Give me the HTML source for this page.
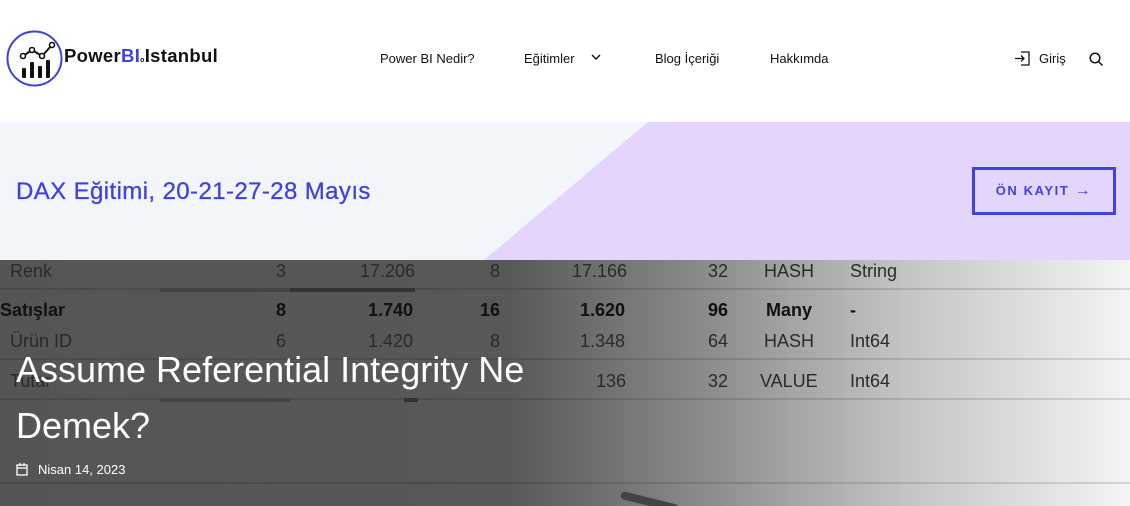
<!DOCTYPE html>
<html><head><meta charset="utf-8"><style>
*{margin:0;padding:0;box-sizing:border-box}
body{width:1130px;height:506px;overflow:hidden;font-family:"Liberation Sans",sans-serif;background:#fff;position:relative}
.hdr{position:absolute;left:0;top:0;width:1130px;height:122px;background:#fff}
.nav{position:absolute;top:51px;font-size:13px;color:#111}
.ban{position:absolute;left:0;top:122px;width:1130px;height:138px;background:#f2f6fb;overflow:hidden}
.hero{position:absolute;left:0;top:260px;width:1130px;height:246px;background:linear-gradient(90deg,#555 0%,#585858 45%,#8a8a8a 62%,#c4c4c4 80%,#f4f4f4 100%);overflow:hidden}
.t{position:absolute;font-size:18px;color:#2a2a2a;font-family:"Liberation Sans Narrow","Liberation Sans",sans-serif}
.ln{position:absolute;left:0;width:1130px;height:2px;background:rgba(0,0,0,.12)}
</style></head><body>
<div class="hdr">
<svg style="position:absolute;left:6px;top:30px" width="57" height="57" viewBox="0 0 57 57">
<circle cx="28.5" cy="28.5" r="27" fill="none" stroke="#3f42e0" stroke-width="2"/>
<g fill="#111"><rect x="16" y="38" width="4" height="10" rx="1"/><rect x="24" y="32" width="4" height="16" rx="1"/><rect x="32" y="36" width="4" height="12" rx="1"/><rect x="40" y="30" width="4" height="18" rx="1"/></g>
<polyline points="17,26 26,20 36,26 46,15" fill="none" stroke="#111" stroke-width="2"/>
<g fill="#fff" stroke="#111" stroke-width="1.6"><circle cx="17" cy="26" r="2.5"/><circle cx="26" cy="20" r="2.5"/><circle cx="36" cy="26" r="2.5"/><circle cx="46" cy="15" r="2.5"/></g>
</svg>
<div style="position:absolute;left:64px;top:45px;font-size:18.5px;font-weight:bold;color:#111;letter-spacing:.3px">Power<span style="color:#3f42e0">BI</span><span style="font-size:7px">o</span>Istanbul</div>
<div class="nav" style="left:380px">Power BI Nedir?</div>
<div class="nav" style="left:524px">Eğitimler</div>
<svg style="position:absolute;left:591px;top:54px" width="10" height="7"><polyline points="1,1 5,5 9,1" fill="none" stroke="#111" stroke-width="1.4"/></svg>
<div class="nav" style="left:655px">Blog İçeriği</div>
<div class="nav" style="left:770px">Hakkımda</div>
<svg style="position:absolute;left:1014px;top:51px" width="16" height="15" viewBox="0 0 16 15" fill="none" stroke="#111" stroke-width="1.3"><path d="M7 1H15V14H7M1 7.5H10M7 4.5L10 7.5L7 10.5"/></svg>
<div class="nav" style="left:1039px">Giriş</div>
<svg style="position:absolute;left:1089px;top:52px" width="15" height="15" fill="none" stroke="#111" stroke-width="1.5"><circle cx="6" cy="6" r="4.8"/><line x1="9.5" y1="9.5" x2="13.5" y2="13.5"/></svg>
</div>
<div class="ban">
<svg style="position:absolute;left:0;top:0" width="1130" height="138"><polygon points="648,0 1130,0 1130,138 484,138" fill="#e3d5fb"/></svg>
<div style="position:absolute;left:16px;top:56px;font-size:24px;color:#3f42e0;letter-spacing:.4px;-webkit-text-stroke:.3px #3f42e0">DAX Eğitimi, 20-21-27-28 Mayıs</div>
<div style="position:absolute;left:972px;top:45px;width:144px;height:48px;border:3px solid #3f42e0;color:#3f42e0;font-size:13px;font-weight:bold;letter-spacing:1.6px;text-align:center;line-height:42px">ÖN KAYIT <span style="font-size:16px">→</span></div>
</div>
<div class="hero">
<div class="ln" style="top:28px"></div><div class="ln" style="top:98px"></div><div class="ln" style="top:138px"></div><div class="ln" style="top:222px"></div>
<div style="position:absolute;left:160px;top:28px;width:130px;height:4px;background:#444"></div>
<div style="position:absolute;left:290px;top:28px;width:125px;height:4px;background:#333"></div>
<div style="position:absolute;left:160px;top:138px;width:130px;height:4px;background:#444"></div>
<div style="position:absolute;left:404px;top:138px;width:14px;height:4px;background:#333"></div>
<div class="t" style="left:10px;top:1px">Renk</div><div class="t" style="left:276px;top:1px">3</div><div class="t" style="left:360px;top:1px">17.206</div><div class="t" style="left:490px;top:1px">8</div><div class="t" style="left:572px;top:1px">17.166</div><div class="t" style="left:708px;top:1px">32</div><div class="t" style="left:764px;top:1px">HASH</div><div class="t" style="left:850px;top:1px">String</div>
<div class="t" style="left:0;top:40px;font-weight:bold;color:#111">Satışlar</div><div class="t" style="left:276px;top:40px;font-weight:bold;color:#111">8</div><div class="t" style="left:368px;top:40px;font-weight:bold;color:#111">1.740</div><div class="t" style="left:480px;top:40px;font-weight:bold;color:#111">16</div><div class="t" style="left:580px;top:40px;font-weight:bold;color:#111">1.620</div><div class="t" style="left:708px;top:40px;font-weight:bold;color:#111">96</div><div class="t" style="left:766px;top:40px;font-weight:bold;color:#111">Many</div><div class="t" style="left:850px;top:40px;font-weight:bold;color:#111">-</div>
<div class="t" style="left:10px;top:71px">Ürün ID</div><div class="t" style="left:276px;top:71px">6</div><div class="t" style="left:368px;top:71px">1.420</div><div class="t" style="left:490px;top:71px">8</div><div class="t" style="left:580px;top:71px">1.348</div><div class="t" style="left:708px;top:71px">64</div><div class="t" style="left:764px;top:71px">HASH</div><div class="t" style="left:850px;top:71px">Int64</div>
<div class="t" style="left:10px;top:111px">Tutar</div><div class="t" style="left:596px;top:111px">136</div><div class="t" style="left:708px;top:111px">32</div><div class="t" style="left:760px;top:111px">VALUE</div><div class="t" style="left:850px;top:111px">Int64</div>
<div style="position:absolute;left:620px;top:238px;width:60px;height:8px;background:#444;transform:rotate(14deg);border-radius:4px"></div>
<div style="position:absolute;left:16px;top:82px;font-size:36px;line-height:56px;color:#fff;font-weight:300;width:600px">Assume Referential Integrity Ne Demek?</div>
<svg style="position:absolute;left:16px;top:203px" width="12" height="13" fill="none" stroke="#fff" stroke-width="1.3"><rect x="1" y="2" width="10" height="10"/><line x1="1" y1="5" x2="11" y2="5"/><line x1="4" y1="0" x2="4" y2="3"/><line x1="8" y1="0" x2="8" y2="3"/></svg>
<div style="position:absolute;left:38px;top:202px;font-size:13px;color:#fff">Nisan 14, 2023</div>
</div>
</body></html>
